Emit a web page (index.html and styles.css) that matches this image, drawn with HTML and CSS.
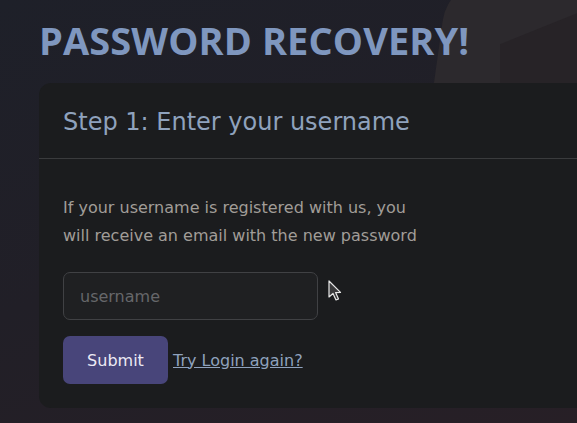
FILE: index.html
```html
<!DOCTYPE html>
<html>
<head>
<meta charset="utf-8">
<link rel="stylesheet" href="styles.css">
</head>
<body>
<div class="page">
  <div class="deco deco1"></div>
  <div class="deco deco2"></div>
  <h1 class="title">PASSWORD RECOVERY!</h1>
  <div class="card">
    <div class="card-header">Step 1: Enter your username</div>
    <div class="card-body">
      <p class="info">If your username is registered with us, you<br>will receive an email with the new password</p>
      <input class="field" type="text" placeholder="username">
      <div class="actions">
        <button class="btn">Submit</button>
        <a class="link" href="#">Try Login again?</a>
      </div>
    </div>
  </div>
  <svg class="cursor" width="14" height="22" viewBox="0 0 14 22"><path d="M1 1 L1 17 L5 13.5 L8 20 L10.5 19 L7.6 12.6 L12.5 12.4 Z" fill="#3a3a3c" stroke="#e8e8e8" stroke-width="1.2" stroke-linejoin="round"/></svg>
</div>
</body>
</html>
```
FILE: styles.css
```css
html, body {
  margin: 0;
  padding: 0;
}
body {
  width: 577px;
  height: 423px;
  overflow: hidden;
  background: linear-gradient(160deg, #1e2029 0%, #211f27 50%, #271f26 100%);
  font-family: "DejaVu Sans", sans-serif;
}
.page {
  position: relative;
  width: 577px;
  height: 423px;
  overflow: hidden;
  padding: 0 0 0 39px;
  box-sizing: border-box;
}
.deco {
  position: absolute;
}
.deco1 {
  left: 440px;
  top: -20px;
  width: 200px;
  height: 120px;
  background: #2c292d;
  transform: skewX(-8deg);
  border-top-left-radius: 40px;
}
.deco2 {
  left: 500px;
  top: 20px;
  width: 120px;
  height: 100px;
  background: #272327;
  transform: skewY(-22deg);
}
.title {
  position: relative;
  margin: 0;
  padding-top: 17px;
  height: 83px;
  box-sizing: border-box;
  font-family: "Open Sans", sans-serif;
  font-weight: 700;
  font-size: 38px;
  line-height: 46px;
  color: #7f97bf;
  letter-spacing: 0.1px;
  white-space: nowrap;
}
.card {
  position: relative;
  width: 600px;
  height: 325px;
  background: #1b1c1e;
  border-radius: 12px;
}
.card-header {
  height: 76px;
  box-sizing: border-box;
  padding: 24px 24px 0;
  font-size: 24px;
  line-height: 30px;
  color: #8fa2bd;
  border-bottom: 1px solid #3a3b3d;
}
.card-body {
  padding: 35px 24px 0;
}
.info {
  margin: 0 0 22px;
  font-size: 16px;
  line-height: 28px;
  color: #a19d98;
}
.field {
  display: block;
  width: 255px;
  height: 48px;
  box-sizing: border-box;
  padding: 0 16px;
  background: #1f2022;
  border: 1px solid #404144;
  border-radius: 7px;
  font-family: "DejaVu Sans", sans-serif;
  font-size: 16px;
  color: #ccc;
  outline: none;
}
.field::placeholder {
  color: #66676a;
}
.actions {
  display: flex;
  align-items: center;
  gap: 5px;
  margin-top: 16px;
}
.btn {
  width: 105px;
  height: 48px;
  border: none;
  border-radius: 7px;
  background: #48457a;
  color: #eceaf4;
  font-family: "DejaVu Sans", sans-serif;
  font-size: 16px;
  padding: 0;
}
.link {
  font-size: 16px;
  color: #8fa2bd;
  text-decoration: underline;
}
.cursor {
  position: absolute;
  left: 328px;
  top: 280px;
}
```
